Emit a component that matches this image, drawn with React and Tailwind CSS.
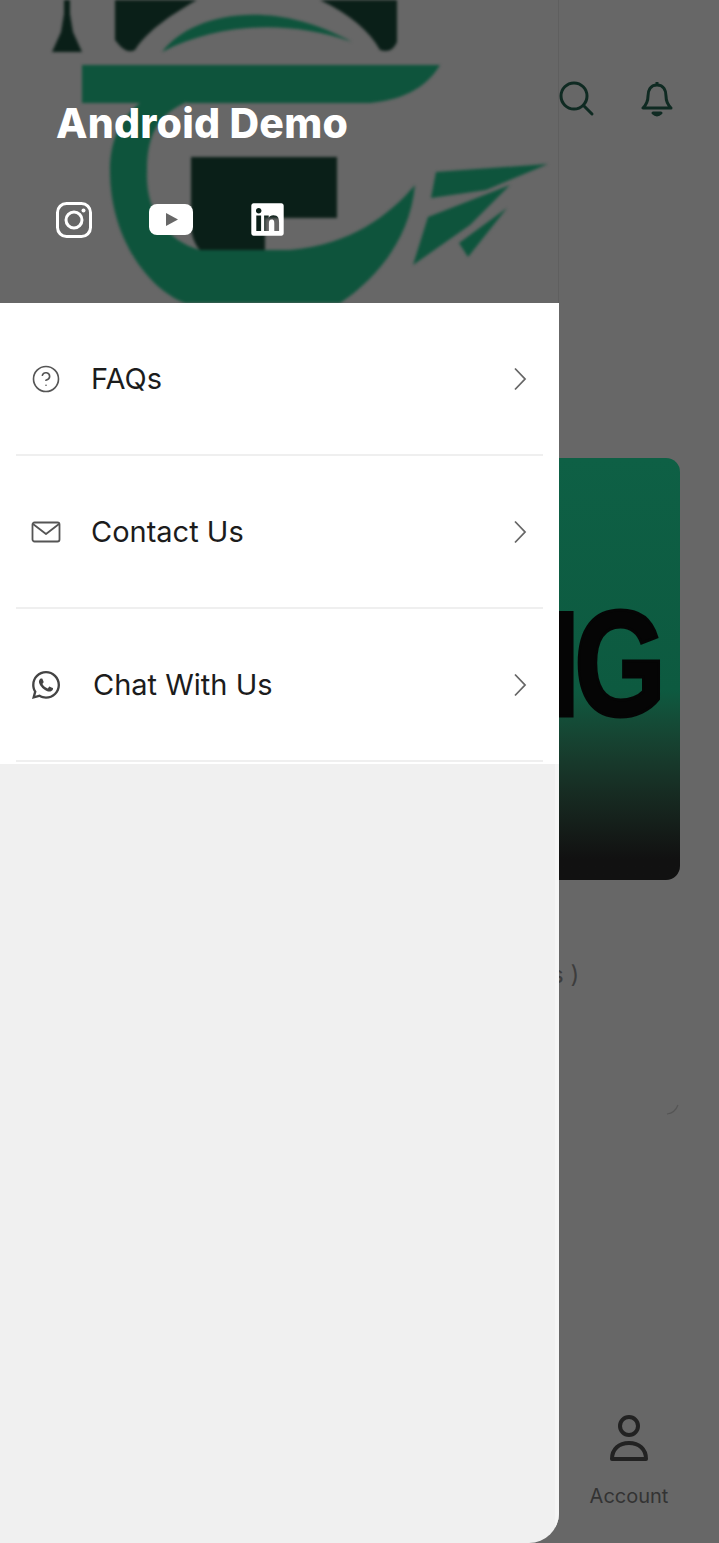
import { FaLinkedin, FaWhatsapp } from "react-icons/fa";
import { CircleHelp } from "lucide-react";

const Logo = () => (
  <svg className="absolute left-0 top-0 blur-[1.5px]" width="559" height="303" viewBox="0 0 559 303">
    {/* pawn */}
    <path d="M64 0 L70 0 L70 14 L73 32 L82 52 L52 52 L61 32 L64 14 Z" fill="#0a1f18" />
    {/* cap */}
    <path d="M115 0 L197 0 C165 18 145 34 135 50 Q128 54 120 46 L115 40 Z" fill="#0a1f18" />
    <path d="M320 0 L397 0 L397 42 Q392 54 380 50 C370 32 350 14 320 0 Z" fill="#0a1f18" />
    <path d="M162 52 C190 14 270 -4 352 42 C290 20 220 22 162 52 Z" fill="#0e543c" />
    {/* G */}
    <path d="M82 65 L440 65 C425 90 400 100 370 103 L187 103 L187 102 C155 115 147 140 147 170 C145 210 165 240 200 250 L290 250 C350 245 390 215 415 185 C410 240 375 280 340 303 L185 303 C150 290 110 240 110 170 C110 145 118 120 140 103 L82 103 Z" fill="#0e543c" />
    <path d="M191 157 L337 157 L337 218 L265 218 L265 250 L200 250 C195 245 191 235 191 225 Z" fill="#0a1f18" />
    {/* plane */}
    <path d="M436 172 L548 164 L486 190 L431 198 Z" fill="#0e543c" />
    <path d="M428 217 L510 185 L470 225 L413 265 Z" fill="#0e543c" />
    <path d="M459 243 L507 208 L468 257 Z" fill="#0e543c" />
  </svg>
);

const Chevron = () => (
  <svg width="14" height="24" viewBox="0 0 14 24" fill="none" stroke="#666" strokeWidth="1.8">
    <path d="M2 1.5 L12 12 L2 22.5" />
  </svg>
);

const MailIcon = () => (
  <svg width="30" height="22" viewBox="0 0 30 22" fill="none" stroke="#555" strokeWidth="1.8" strokeLinejoin="round">
    <rect x="1.5" y="1.5" width="27" height="19" rx="2" />
    <path d="M2 3 L15 13 L28 3" />
  </svg>
);

const menu = [
  { label: "FAQs", icon: <CircleHelp size={30} strokeWidth={1.3} color="#555" />, textClass: "ml-[29px]" },
  { label: "Contact Us", icon: <MailIcon />, textClass: "ml-[29px]" },
  { label: "Chat With Us", icon: <FaWhatsapp size={32} color="#444" />, textClass: "ml-[31px]" },
];

export default function App() {
  return (
    <div className="flex h-[1543px] w-[719px] overflow-hidden bg-[#676767] font-['Inter',sans-serif]">
      {/* drawer */}
      <div className="relative z-10 flex w-[559px] shrink-0 flex-col overflow-hidden rounded-br-[30px] bg-[#f0f0f0]">
        <div className="relative h-[303px] shrink-0 overflow-hidden border-r border-[#5f5f5f] bg-[#676767]">
          <Logo />
          <div className="relative flex flex-col pl-[56px] pt-[100px]">
            <h1 className="text-[41px] font-extrabold leading-[46px] tracking-[0.2px] text-white">Android Demo</h1>
            <div className="mt-[55px] flex items-center">
              <svg width="36" height="36" viewBox="0 0 36 36" fill="none" stroke="#fff" strokeWidth="3">
                <rect x="1.5" y="1.5" width="33" height="33" rx="9" />
                <circle cx="18" cy="18" r="8" />
                <circle cx="27.5" cy="8.5" r="2" fill="#fff" stroke="none" />
              </svg>
              <svg className="ml-[57px]" width="44" height="31" viewBox="0 0 44 31">
                <rect width="44" height="31" rx="8" fill="#fff" />
                <path d="M17 9 L29 15.5 L17 22 Z" fill="#676767" />
              </svg>
              <FaLinkedin className="ml-[56px] text-white" size={37} />
            </div>
          </div>
        </div>
        <div className="h-[461px] shrink-0 bg-white">
          {menu.map((item) => (
            <div key={item.label} className="mx-[16px] flex h-[153px] items-center border-b-2 border-[#efefef] pl-[14px] pr-[16px]">
              <div className="flex w-[32px] justify-center">{item.icon}</div>
              <span className={`${item.textClass} flex-1 text-[29px] text-[#1c1c1c]`}>{item.label}</span>
              <Chevron />
            </div>
          ))}
        </div>
        <div className="flex-1 border-r-4 border-[#f5f5f5]" />
      </div>

      {/* page behind the drawer */}
      <div className="flex min-w-0 flex-1 flex-col">
        <div className="flex h-[458px] shrink-0 items-start pt-[81px]">
          <svg width="36" height="36" viewBox="0 0 36 36" fill="none" stroke="#0f2a22" strokeWidth="3" strokeLinecap="round">
            <circle cx="15" cy="15" r="13" />
            <path d="M24.5 24.5 L33 33" />
          </svg>
          <svg className="ml-[46px]" width="32" height="36" viewBox="0 0 32 36" fill="none" stroke="#0f2a22" strokeWidth="3" strokeLinejoin="round">
            <path d="M16 4 C9 4 7 10 7 15 C7 21 5 24 2 27 L30 27 C27 24 25 21 25 15 C25 10 23 4 16 4 Z" />
            <path d="M16 1 L16 4" />
            <path d="M12 32 Q16 36 20 32 Z" fill="#0f2a22" />
          </svg>
        </div>
        <div className="flex h-[422px] w-[121px] shrink-0 items-center justify-end overflow-hidden rounded-r-[14px] bg-gradient-to-b from-[#0e6045] from-0% via-[#0d5a40] via-55% to-[#111111] to-95%">
          <span className="origin-right -translate-y-[5px] scale-x-[0.79] whitespace-nowrap pr-[25px] font-['Liberation_Sans',sans-serif] text-[150px] font-bold leading-none tracking-[-8px] text-[#050505] [-webkit-text-stroke:3px_#050505]">ING</span>
        </div>
        <div className="flex h-[240px] shrink-0 flex-col pt-[78px] text-[24px] leading-[34px] text-[#3d3d3d]">
          <span className="-ml-[8px]">s )</span>
          <svg className="ml-[106px] mt-[112px]" width="14" height="12" viewBox="0 0 14 12" fill="none" stroke="#555" strokeWidth="1.2">
            <path d="M13 1 Q10 9 2 10" />
          </svg>
        </div>
        <div className="mt-auto flex h-[145px] flex-col items-center pr-[20px] pt-[17px]">
          <svg width="42" height="46" viewBox="0 0 42 46" fill="none" stroke="#222" strokeWidth="4">
            <circle cx="21" cy="11" r="9" />
            <path d="M4 44 C4 34 11 28 21 28 C31 28 38 34 38 44 Z" strokeLinejoin="round" />
          </svg>
          <span className="mt-[21px] text-[20px] leading-[28px] text-[#333]">Account</span>
        </div>
      </div>
    </div>
  );
}
